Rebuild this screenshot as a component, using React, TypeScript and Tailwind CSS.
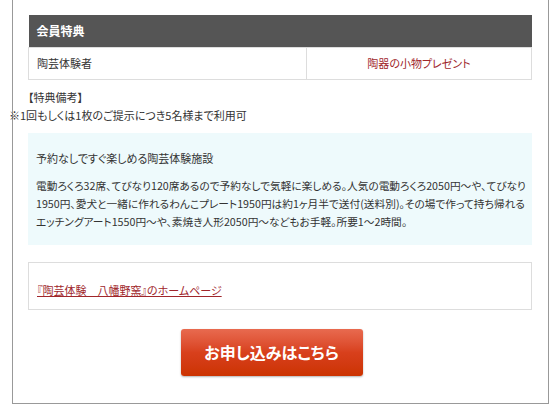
export default function App() {
  return (
    <div className="w-[560px] h-[420px] bg-white font-['Noto_Sans_CJK_JP',sans-serif] text-[#333] [font-feature-settings:'palt'] overflow-hidden">
      <div className="ml-[12px] w-[537px] h-[404px] border-x border-b border-[#999] bg-white pt-[15px] px-[15px]">
        <table className="w-[504px] border-collapse text-[11px]">
          <thead>
            <tr>
              <th colSpan={2} className="h-[32px] bg-[#555] text-left pl-[8px] text-white text-[12px] font-bold">
                会員特典
              </th>
            </tr>
          </thead>
          <tbody>
            <tr>
              <td className="h-[32px] w-[278px] border border-[#ddd] pl-[8px]">陶芸体験者</td>
              <td className="h-[32px] border border-[#ddd] text-center text-[#a0262b]">陶器の小物プレゼント</td>
            </tr>
          </tbody>
        </table>

        <div className="mt-[8px] text-[11px] leading-[18px]">
          <p>【特典備考】</p>
          <p className="-ml-[19px] whitespace-nowrap">※1回もしくは1枚のご提示につき5名様まで利用可</p>
        </div>

        <div className="mt-[9px] w-[504px] h-[112px] bg-[#eefafc] px-[8px] pt-[16px] text-[10.7px] leading-[18px]">
          <p className="text-[11px]">予約なしですぐ楽しめる陶芸体験施設</p>
          <p className="mt-[10px] whitespace-nowrap">
            電動ろくろ32席、てびなり120席あるので予約なしで気軽に楽しめる。人気の電動ろくろ2050円〜や、てびなり
            <br />
            1950円、愛犬と一緒に作れるわんこプレート1950円は約1ヶ月半で送付(送料別)。その場で作って持ち帰れる
            <br />
            エッチングアート1550円〜や、素焼き人形2050円〜などもお手軽。所要1〜2時間。
          </p>
        </div>

        <div className="mt-[17px] w-[504px] h-[48px] border border-[#ddd] px-[8px] pt-[18px] text-[11px] leading-[18px]">
          <a href="#" className="text-[#a0262b] underline">『陶芸体験　八幡野窯』のホームページ</a>
        </div>

        <div className="mt-[19px] flex justify-center pr-[18px]">
          <button className="w-[182px] h-[47px] rounded-[3px] bg-gradient-to-b from-[#e86a4f] via-[#d8401c] to-[#cc3300] text-white text-[16px] font-bold shadow-[0_1px_2px_rgba(0,0,0,0.3)]">
            お申し込みはこちら
          </button>
        </div>
      </div>
    </div>
  )
}
